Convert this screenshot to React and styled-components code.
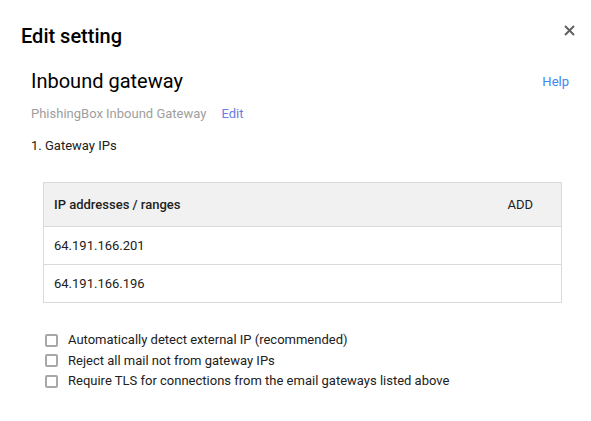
import React from 'react'
import styled, { createGlobalStyle } from 'styled-components'

const Global = createGlobalStyle`
  html, body { margin: 0; padding: 0; background: #fff; }
  body { font-family: Roboto, "Noto Sans", Arial, sans-serif; color: #212121; }
`

const Dialog = styled.div`
  width: 591px;
  height: 421px;
  box-sizing: border-box;
  padding: 23px 16px 0 21px;
`

const TitleBar = styled.div`
  display: flex;
  justify-content: space-between;
  align-items: flex-start;
`

const Title = styled.h1`
  margin: 0;
  font-size: 20px;
  font-weight: 500;
  line-height: 26px;
  color: #000;
`

const Close = styled.button`
  border: 0;
  background: none;
  padding: 0;
  margin-top: 2px;
  width: 11px;
  height: 11px;
  display: flex;
  cursor: pointer;
`

const Body = styled.div`
  padding: 0 6px 0 10px;
`

const SectionHead = styled.div`
  display: flex;
  justify-content: space-between;
  align-items: center;
  margin-top: 18px;
`

const Heading = styled.h2`
  margin: 0;
  font-size: 20px;
  font-weight: 400;
  line-height: 28px;
  color: #000;
`

const Link = styled.a`
  font-size: 13px;
  color: ${p => p.$tone || '#4285f4'};
  text-decoration: none;
  cursor: pointer;
`

const Sub = styled.div`
  display: flex;
  gap: 15px;
  margin-top: 11px;
  font-size: 13px;
  line-height: 16px;
`

const Muted = styled.span`
  color: #9e9e9e;
`

const Step = styled.div`
  margin-top: 16px;
  font-size: 13px;
  line-height: 16px;
  color: #212121;
`

const Table = styled.div`
  margin: 28px 7px 0 12px;
  border: 1px solid #dadada;
`

const Row = styled.div`
  display: flex;
  justify-content: space-between;
  align-items: center;
  height: ${p => (p.$head ? '43px' : '37px')};
  padding: 0 28px 0 10px;
  background: ${p => (p.$head ? '#f1f1f1' : '#fff')};
  border-top: ${p => (p.$first ? 'none' : '1px solid #dadada')};
  font-size: 13px;
  font-weight: ${p => (p.$head ? 500 : 400)};
  color: #212121;
`

const AddButton = styled.button`
  border: 0;
  background: none;
  padding: 0;
  font-family: inherit;
  font-size: 13px;
  font-weight: 400;
  color: #212121;
  cursor: pointer;
`

const Options = styled.div`
  margin: 29px 0 0 14px;
  display: flex;
  flex-direction: column;
  gap: 4px;
`

const Option = styled.label`
  display: flex;
  align-items: center;
  gap: 10px;
  font-size: 13px;
  line-height: 16.5px;
  color: #212121;
`

const Box = styled.span`
  box-sizing: border-box;
  width: 13px;
  height: 13px;
  border: 2px solid #a8a8a8;
  border-radius: 2px;
  flex: none;
`

const options = [
  'Automatically detect external IP (recommended)',
  'Reject all mail not from gateway IPs',
  'Require TLS for connections from the email gateways listed above',
]

const ips = ['64.191.166.201', '64.191.166.196']

export default function App() {
  return (
    <Dialog>
      <Global />
      <TitleBar>
        <Title>Edit setting</Title>
        <Close aria-label="Close">
          <svg width="11" height="11" viewBox="0 0 11 11">
            <path d="M1 1L10 10M10 1L1 10" stroke="#616161" strokeWidth="2" />
          </svg>
        </Close>
      </TitleBar>
      <Body>
        <SectionHead>
          <Heading>Inbound gateway</Heading>
          <Link>Help</Link>
        </SectionHead>
        <Sub>
          <Muted>PhishingBox Inbound Gateway</Muted>
          <Link $tone="#6b7be0">Edit</Link>
        </Sub>
        <Step>1. Gateway IPs</Step>
        <Table>
          <Row $head $first>
            <span>IP addresses / ranges</span>
            <AddButton>ADD</AddButton>
          </Row>
          {ips.map(ip => (
            <Row key={ip}>{ip}</Row>
          ))}
        </Table>
        <Options>
          {options.map(o => (
            <Option key={o}>
              <Box />
              {o}
            </Option>
          ))}
        </Options>
      </Body>
    </Dialog>
  )
}
